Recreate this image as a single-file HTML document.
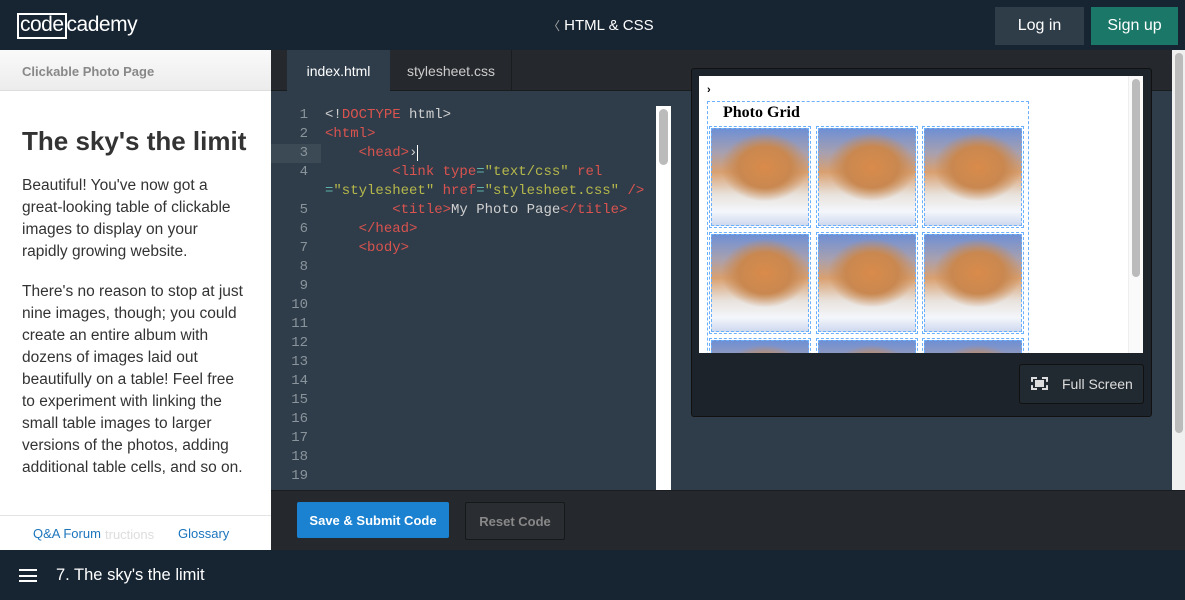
<!DOCTYPE html>
<html><head><style>
*{margin:0;padding:0;box-sizing:border-box}
body{width:1185px;height:600px;overflow:hidden;background:#2f3d4a;font-family:"Liberation Sans",sans-serif;position:relative}
.a{position:absolute}
.hdr{left:0;top:0;width:1185px;height:50px;background:#172532}
.code{font-family:"Liberation Mono",monospace;font-size:14px;line-height:19px;color:#d0d0d0;white-space:pre}
.t{color:#d9534f}.s{color:#b6b84a}.e{color:#5fb3a8}
.ln{color:#8a949c;font-family:"Liberation Mono",monospace;font-size:14px;line-height:19px;text-align:right;width:38px}
.fox{position:absolute;width:102px;height:102px;border:1px dashed #6ab0ff;padding:1px}
.fox div{width:100%;height:100%;background:radial-gradient(ellipse 45% 35% at 55% 40%,#d98b4a 0%,#c98850 60%,transparent 100%),linear-gradient(180deg,#6d8fd6 0%,#a7a0b0 25%,#d9a070 45%,#e8e2dc 68%,#f4f6fb 85%,#cdd8ee 100%);outline:1px dashed #6ab0ff;outline-offset:-1px}
</style></head><body>
<div class="a hdr"></div>
<div class="a" style="left:17px;top:13px;height:26px;border:2px solid #fff;width:50px"></div>
<div class="a" style="left:20px;top:13px;color:#fff;font-size:21px;letter-spacing:-0.5px">code<span style="margin-left:3px">cademy</span></div>
<div class="a" style="left:548px;top:17px;color:#fff;font-size:15px"><span style="color:#aaa;font-size:12px">〈</span> HTML &amp; CSS</div>
<div class="a" style="left:995px;top:7px;width:89px;height:38px;background:#2f3d48;color:#fff;font-size:16px;text-align:center;line-height:38px">Log in</div>
<div class="a" style="left:1091px;top:7px;width:87px;height:38px;background:#1b7868;color:#fff;font-size:16px;text-align:center;line-height:38px">Sign up</div>

<div class="a" style="left:0;top:50px;width:271px;height:500px;background:#fff"></div>
<div class="a" style="left:0;top:50px;width:271px;height:41px;background:linear-gradient(#fafafa,#ececec);border-bottom:1px solid #ddd;color:#888;font-weight:bold;font-size:13px;padding:14px 22px">Clickable Photo Page</div>
<div class="a" style="left:22px;top:126px;font-size:26px;font-weight:bold;color:#333">The sky's the limit</div>
<div class="a" style="left:22px;top:175px;white-space:nowrap;font-size:15.5px;line-height:22px;color:#333">Beautiful! You've now got a<br>great-looking table of clickable<br>images to display on your<br>rapidly growing website.<br><div style="height:18px"></div>There's no reason to stop at just<br>nine images, though; you could<br>create an entire album with<br>dozens of images laid out<br>beautifully on a table! Feel free<br>to experiment with linking the<br>small table images to larger<br>versions of the photos, adding<br>additional table cells, and so on.</div>
<div class="a" style="left:0;top:515px;width:271px;border-top:1px solid #e4e4e4"></div>
<div class="a" style="left:33px;top:526px;font-size:13px;color:#1c75bc">Q&amp;A Forum</div>
<div class="a" style="left:105px;top:527px;font-size:13px;color:#ddd">tructions</div>
<div class="a" style="left:178px;top:526px;font-size:13px;color:#1c75bc">Glossary</div>

<div class="a" style="left:271px;top:50px;width:914px;height:41px;background:#25282c;border-bottom:1px solid #1a1d20"></div>
<div class="a" style="left:287px;top:50px;width:103px;height:41px;background:#2f3d4a;color:#fff;font-size:14px;text-align:center;line-height:42px">index.html</div>
<div class="a" style="left:391px;top:50px;width:121px;height:41px;border-right:1px solid #1a1d20;color:#ccc;font-size:14px;text-align:center;line-height:42px">stylesheet.css</div>
<div class="a" style="left:271px;top:144px;width:50px;height:19px;background:#3c4a55"></div>
<div class="a ln" style="left:270px;top:106px">1<br>2<br>3<br>4<br><br>5<br>6<br>7<br>8<br>9<br>10<br>11<br>12<br>13<br>14<br>15<br>16<br>17<br>18<br>19</div>
<div class="a code" style="left:325px;top:106px">&lt;!<span class="t">DOCTYPE</span> html&gt;
<span class="t">&lt;html&gt;</span>
    <span class="t">&lt;head&gt;</span>›<span style="border-left:1px solid #fff"></span>
        <span class="t">&lt;link type</span><span class="e">=</span><span class="s">"text/css"</span> <span class="t">rel</span>
<span class="e">=</span><span class="s">"stylesheet"</span> <span class="t">href</span><span class="e">=</span><span class="s">"stylesheet.css"</span> <span class="t">/&gt;</span>
        <span class="t">&lt;title&gt;</span>My Photo Page<span class="t">&lt;/title&gt;</span>
    <span class="t">&lt;/head&gt;</span>
    <span class="t">&lt;body&gt;</span></div>
<div class="a" style="left:656px;top:106px;width:15px;height:384px;background:#fff"></div>
<div class="a" style="left:659px;top:109px;width:9px;height:56px;background:#bbb;border-radius:5px"></div>

<div class="a" style="left:691px;top:68px;width:461px;height:349px;background:#1c232a;border:1px solid #111;border-radius:3px"></div>
<div class="a" style="left:699px;top:76px;width:444px;height:277px;background:#fff;overflow:hidden">
<div style="position:absolute;left:8px;top:8px;font-size:11px;font-weight:bold">›</div>
<div style="position:absolute;left:8px;top:25px;width:322px;height:300px;border:1px dashed #6ab0ff"></div>
<div style="position:absolute;left:24px;top:28px;font-family:'Liberation Serif',serif;font-weight:bold;font-size:16px">Photo Grid</div>
<div class="fox" style="left:10px;top:50px"><div></div></div>
<div class="fox" style="left:117px;top:50px"><div></div></div>
<div class="fox" style="left:223px;top:50px"><div></div></div>
<div class="fox" style="left:10px;top:156px"><div></div></div>
<div class="fox" style="left:117px;top:156px"><div></div></div>
<div class="fox" style="left:223px;top:156px"><div></div></div>
<div class="fox" style="left:10px;top:262px"><div></div></div>
<div class="fox" style="left:117px;top:262px"><div></div></div>
<div class="fox" style="left:223px;top:262px"><div></div></div>
<div style="position:absolute;left:429px;top:0;width:15px;height:277px;background:#fafafa;border-left:1px solid #eee"></div>
<div style="position:absolute;left:433px;top:3px;width:8px;height:198px;background:#bbb;border-radius:4px"></div>
</div>
<div class="a" style="left:1019px;top:364px;width:125px;height:40px;border:1px solid #111;border-radius:3px;background:#222a31;color:#ddd;font-size:14px;line-height:38px;padding-left:42px">Full Screen</div>
<div class="a" style="left:1031px;top:377px;width:17px;height:13px;border:2px dashed #ddd"></div>
<div class="a" style="left:1035px;top:380px;width:9px;height:7px;background:#ddd"></div>
<div class="a" style="left:1172px;top:50px;width:13px;height:440px;background:#f0f0f0"></div>
<div class="a" style="left:1175px;top:53px;width:8px;height:380px;background:#bbb;border-radius:4px"></div>

<div class="a" style="left:271px;top:490px;width:914px;height:60px;background:#25292d;border-top:1px solid #1a1d20"></div>
<div class="a" style="left:297px;top:502px;width:152px;height:36px;background:#1a82d0;border-radius:2px;color:#fff;font-weight:bold;font-size:13px;text-align:center;line-height:37px">Save &amp; Submit Code</div>
<div class="a" style="left:465px;top:502px;width:100px;height:38px;border:1px solid #151719;border-radius:2px;background:#2a2d31;color:#888;font-weight:bold;font-size:13px;text-align:center;line-height:38px">Reset Code</div>

<div class="a" style="left:0;top:550px;width:1185px;height:50px;background:#172532"></div>
<div class="a" style="left:19px;top:569px;width:18px;height:13px;border-top:2px solid #fff;border-bottom:2px solid #fff"></div>
<div class="a" style="left:19px;top:575px;width:18px;height:2px;background:#fff"></div>
<div class="a" style="left:56px;top:566px;color:#fff;font-size:16.5px">7. The sky's the limit</div>
</body></html>
